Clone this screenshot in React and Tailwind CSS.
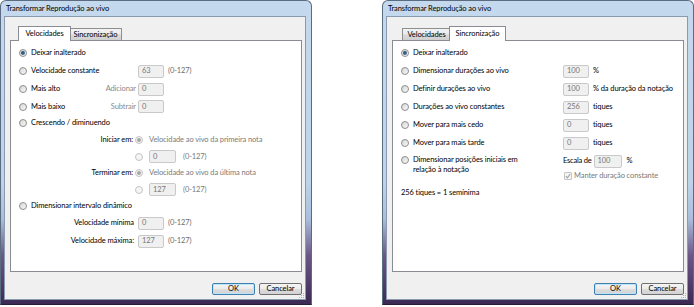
function Radio({ checked = false, disabled = false }) {
  return (
    <span
      className={
        'flex h-[8px] w-[8px] shrink-0 items-center justify-center rounded-full border ' +
        (disabled
          ? 'border-[#c4c4c4] bg-[#f5f5f5]'
          : 'border-[#8e8e8e] bg-[linear-gradient(135deg,#d6d6d6,#f9f9f9)]')
      }
    >
      {checked && (
        <span
          className={
            'h-[4px] w-[4px] rounded-full ' +
            (disabled ? 'bg-[#a8a8a8]' : 'bg-[linear-gradient(135deg,#1d3e5c,#4f7ea6)]')
          }
        />
      )}
    </span>
  );
}

function Field({ value, wide = false, wider = false }) {
  return (
    <span
      className={
        'flex h-[13px] shrink-0 items-center rounded-[2px] border border-[#c9c9c9] bg-[#f0f0f0] pl-[3px] text-[#777777] ' +
        (wider ? 'w-[28px]' : wide ? 'w-[27px]' : 'w-[26px]')
      }
    >
      {value}
    </span>
  );
}

function Check() {
  return (
    <span className="flex h-[8px] w-[8px] shrink-0 items-center justify-center rounded-[1px] border border-[#c4c4c4] bg-[#f5f5f5]">
      <svg width="6" height="6" viewBox="0 0 6 6">
        <polyline points="0.8,3.2 2.4,4.8 5.2,1" fill="none" stroke="#a5a5a5" strokeWidth="1.2" />
      </svg>
    </span>
  );
}

function RadioLabel({ label, checked }) {
  return (
    <div className="flex items-center pl-[8px]">
      <Radio checked={checked} />
      <span className="ml-[4px] whitespace-nowrap">{label}</span>
    </div>
  );
}

function Tabs({ active }) {
  const tab = (name, w, wSel, isActive) =>
    isActive ? (
      <div
        className={
          'relative z-10 -mx-[2px] -mb-px flex h-[15px] items-start justify-center border border-b-0 border-[#898c95] bg-white pt-[2px] ' +
          wSel
        }
      >
        {name}
      </div>
    ) : (
      <div
        className={
          'flex h-[12px] items-center justify-center border border-b-0 border-[#8e8f8f] bg-[linear-gradient(180deg,#f2f2f2_0%,#ebebeb_50%,#dddddd_50%,#cfcfcf_100%)] ' +
          w
        }
      >
        {name}
      </div>
    );
  return (
    <div className="flex h-[14px] items-end pl-[10px]">
      {tab('Velocidades', 'w-[49px]', 'w-[53px]', active === 'vel')}
      {tab('Sincronização', 'w-[53px]', 'w-[57px]', active === 'sinc')}
    </div>
  );
}

function VelPanel() {
  return (
    <div className="pt-[3px]">
      <div className="flex h-[18px] items-center">
        <RadioLabel label="Deixar inalterado" checked />
      </div>
      <div className="flex h-[18px] items-center">
        <div className="w-[127px]">
          <RadioLabel label="Velocidade constante" />
        </div>
        <Field value="63" />
        <span className="ml-[4px] text-[#6d6d6d]">(0-127)</span>
      </div>
      <div className="flex h-[18px] items-center">
        <div className="flex w-[127px] items-center">
          <RadioLabel label="Mais alto" />
          <span className="flex-1 pr-[2px] text-right text-[#8a8a8a]">Adicionar</span>
        </div>
        <Field value="0" />
      </div>
      <div className="flex h-[17px] items-center">
        <div className="flex w-[127px] items-center">
          <RadioLabel label="Mais baixo" />
          <span className="flex-1 pr-[2px] text-right text-[#8a8a8a]">Subtrair</span>
        </div>
        <Field value="0" />
      </div>
      <div className="flex h-[16px] items-center">
        <RadioLabel label="Crescendo / diminuendo" />
      </div>
      <div className="flex h-[17px] items-center">
        <span className="w-[122px] text-right">Iniciar em:</span>
        <span className="ml-[2px]">
          <Radio checked disabled />
        </span>
        <span className="ml-[6px] text-[#7a7a7a]">Velocidade ao vivo da primeira nota</span>
      </div>
      <div className="flex h-[17px] items-center">
        <span className="w-[124px]" />
        <Radio disabled />
        <span className="ml-[6px]">
          <Field value="0" wide />
        </span>
        <span className="ml-[7px] text-[#7a7a7a]">(0-127)</span>
      </div>
      <div className="flex h-[16px] items-center">
        <span className="w-[122px] text-right">Terminar em:</span>
        <span className="ml-[2px]">
          <Radio checked disabled />
        </span>
        <span className="ml-[6px] text-[#7a7a7a]">Velocidade ao vivo da última nota</span>
      </div>
      <div className="flex h-[17px] items-center">
        <span className="w-[124px]" />
        <Radio disabled />
        <span className="ml-[6px]">
          <Field value="127" wide />
        </span>
        <span className="ml-[7px] text-[#7a7a7a]">(0-127)</span>
      </div>
      <div className="flex h-[16px] items-center">
        <RadioLabel label="Dimensionar intervalo dinâmico" />
      </div>
      <div className="flex h-[18px] items-center">
        <span className="w-[127px] pr-[4px] text-right">Velocidade mínima</span>
        <Field value="0" />
        <span className="ml-[4px] text-[#6d6d6d]">(0-127)</span>
      </div>
      <div className="flex h-[18px] items-center">
        <span className="w-[127px] pr-[4px] text-right">Velocidade máxima:</span>
        <Field value="127" />
        <span className="ml-[4px] text-[#6d6d6d]">(0-127)</span>
      </div>
    </div>
  );
}

function SincRow({ label, value, unit, checked }) {
  return (
    <div className="flex h-[18px] items-center">
      <div className="w-[170px]">
        <RadioLabel label={label} checked={checked} />
      </div>
      {value !== undefined && <Field value={value} />}
      {unit && <span className="ml-[4px] whitespace-nowrap">{unit}</span>}
    </div>
  );
}

function SincPanel() {
  return (
    <div className="pt-[3px]">
      <SincRow label="Deixar inalterado" checked />
      <SincRow label="Dimensionar durações ao vivo" value="100" unit="%" />
      <SincRow label="Definir durações ao vivo" value="100" unit="% da duração da notação" />
      <SincRow label="Durações ao vivo constantes" value="256" unit="tiques" />
      <SincRow label="Mover para mais cedo" value="0" unit="tiques" />
      <SincRow label="Mover para mais tarde" value="0" unit="tiques" />
      <div className="flex">
        <div className="flex w-[170px] items-start pl-[8px] pt-[3px]">
          <span className="mt-[1px]">
            <Radio />
          </span>
          <span className="ml-[4px] leading-[10px]">
            Dimensionar posições iniciais em
            <br />
            relação à notação
          </span>
        </div>
        <div className="flex flex-col">
          <div className="flex h-[18px] items-center">
            <span className="whitespace-nowrap tracking-[-0.2px]">Escala de</span>
            <span className="ml-[2px]">
              <Field value="100" wider />
            </span>
            <span className="ml-[5px]">%</span>
          </div>
          <div className="flex h-[12px] items-center pl-[1px]">
            <Check />
            <span className="ml-[2px] whitespace-nowrap text-[#7a7a7a]">Manter duração constante</span>
          </div>
        </div>
      </div>
      <div className="mt-[4px] flex h-[14px] items-center pl-[8px]">256 tiques = 1 semínima</div>
    </div>
  );
}

function Button({ children, def = false }) {
  return (
    <div
      className={
        'flex h-[12px] w-[43px] items-center justify-center rounded-[2px] border bg-[linear-gradient(180deg,#f4f4f4_0%,#ececec_50%,#dedede_50%,#d2d2d2_100%)] ' +
        (def ? 'border-[#3c7fb1] shadow-[inset_0_0_0_1px_#bfe4f8]' : 'border-[#707070]')
      }
    >
      {children}
    </div>
  );
}

function Window({ active }) {
  return (
    <div className="flex h-[305px] w-[312px] flex-col rounded-t-[6px] border border-[#5b6b80] border-b-[#2a1c3b] bg-[linear-gradient(180deg,#c4d9ee_0%,#bcd3ea_60%,#a9bedb_72%,#6a5787_84%,#3c2a55_100%)]">
      <div className="h-[15px] pl-[5px] pt-[3px] leading-[10px] text-black">Transformar Reprodução ao vivo</div>
      <div className="relative ml-[3px] mr-[5px] flex h-[284px] flex-col border border-[#8a9bb0] bg-[#f0f0f0] pl-[5px] pr-[3px] pt-[9px]">
        <Tabs active={active} />
        <div className="h-[232px] border border-[#898c95] bg-white">
          {active === 'vel' ? <VelPanel /> : <SincPanel />}
        </div>
        <div className="mt-[11px] flex justify-end gap-[4px]">
          <Button def>OK</Button>
          <Button>Cancelar</Button>
        </div>
        <svg className="absolute bottom-0 right-0" width="7" height="7" viewBox="0 0 7 7">
          <rect x="5" y="1" width="1" height="1" fill="#b0b0b0" />
          <rect x="3" y="3" width="1" height="1" fill="#b0b0b0" />
          <rect x="5" y="3" width="1" height="1" fill="#b0b0b0" />
          <rect x="1" y="5" width="1" height="1" fill="#b0b0b0" />
          <rect x="3" y="5" width="1" height="1" fill="#b0b0b0" />
          <rect x="5" y="5" width="1" height="1" fill="#b0b0b0" />
        </svg>
      </div>
    </div>
  );
}

export default function App() {
  return (
    <div
      className="flex h-[307px] w-[694px] items-start justify-between bg-white text-[7.5px] leading-[10px] tracking-[-0.1px] text-black"
      style={{ fontFamily: 'Lato, "Open Sans", sans-serif' }}
    >
      <Window active="vel" />
      <Window active="sinc" />
    </div>
  );
}
